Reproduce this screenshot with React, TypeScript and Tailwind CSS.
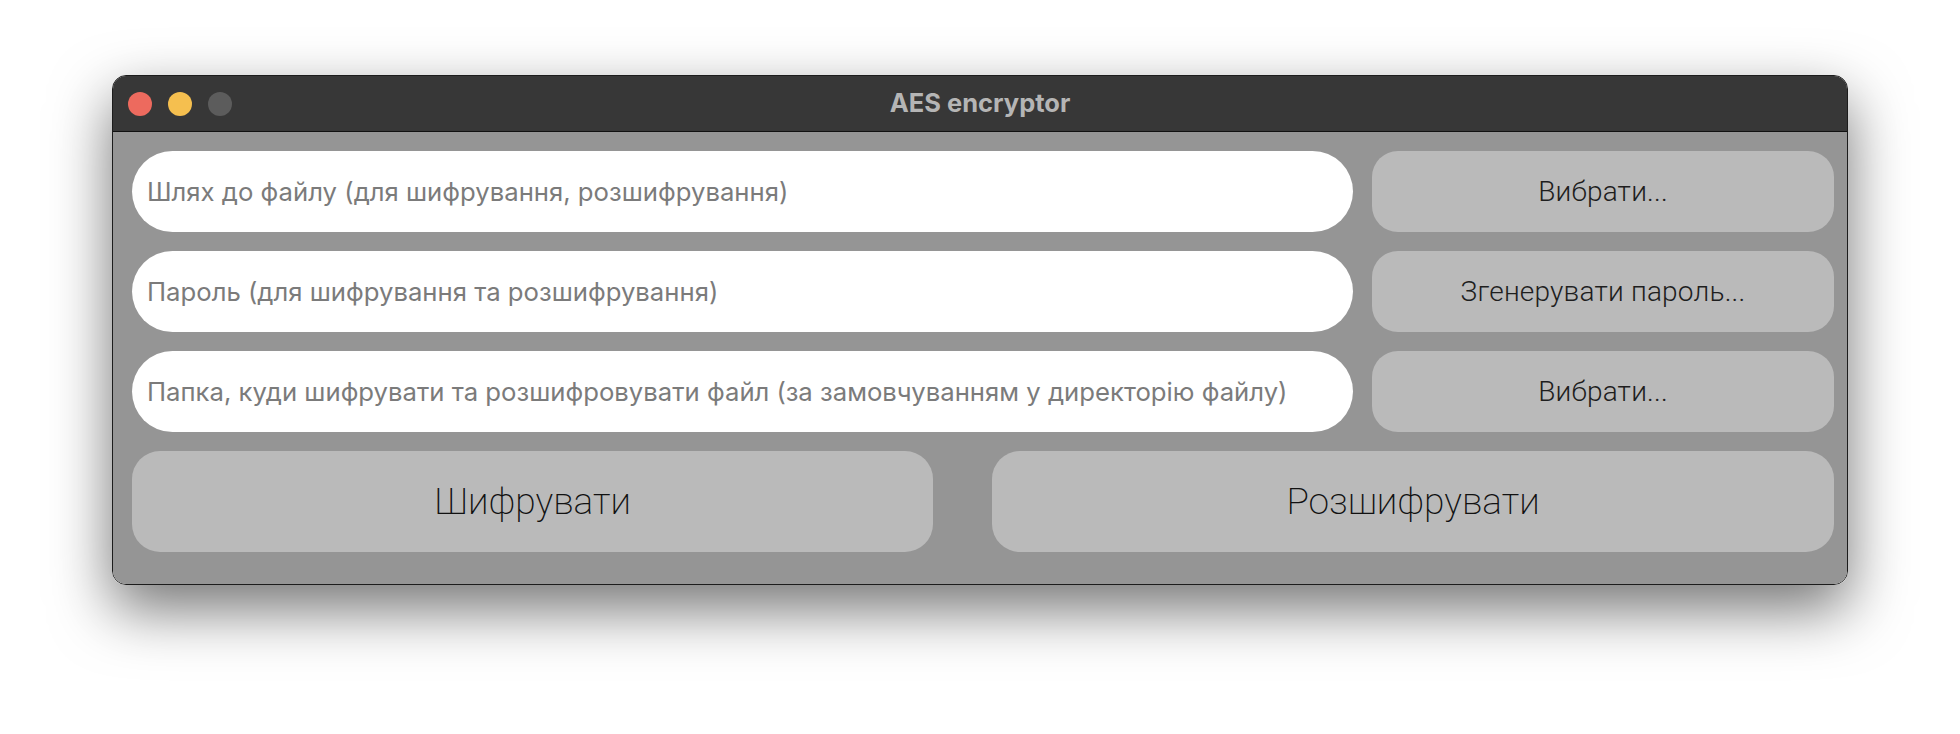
import React from "react";

const rows = [
  { placeholder: "Шлях до файлу (для шифрування, розшифрування)", action: "Вибрати..." },
  { placeholder: "Пароль (для шифрування та розшифрування)", action: "Згенерувати пароль..." },
  {
    placeholder: "Папка, куди шифрувати та розшифровувати файл (за замовчуванням у директорію файлу)",
    action: "Вибрати...",
  },
];

const App = () => {
  return (
    <div className="min-h-[734px] w-[1960px] bg-white pl-[112px] pt-[75px] font-['Roboto',sans-serif]">
      {/* Window */}
      <div className="w-[1736px] overflow-hidden rounded-[14px] border border-[#1c1c1c] shadow-[0_24px_60px_rgba(0,0,0,0.55)]">
        {/* Title bar */}
        <div className="relative flex h-[56px] items-center justify-center border-b border-[#111] bg-[#373737]">
          <div className="absolute left-[15px] top-[16px] flex gap-[16px]">
            <span className="h-[24px] w-[24px] rounded-full bg-[#ed6a5e]" />
            <span className="h-[24px] w-[24px] rounded-full bg-[#f5bf4f]" />
            <span className="h-[24px] w-[24px] rounded-full bg-[#5c5c5c]" />
          </div>
          <h1 className="font-['Inter',sans-serif] text-[25.5px] font-bold text-[#b5b5b5]">AES encryptor</h1>
        </div>

        {/* Content */}
        <div className="flex flex-col gap-[19px] bg-[#959595] pb-[32px] pl-[19px] pr-[13px] pt-[19px]">
          {rows.map((row, i) => (
            <div key={i} className="flex h-[81px] gap-[19px]">
              <input
                className="h-full flex-1 rounded-full bg-white px-[15px] font-['Inter',sans-serif] text-[25.7px] text-[#333] outline-none placeholder:text-[#7b7b7b]"
                placeholder={row.placeholder}
              />
              <button className="h-full w-[462px] rounded-[26px] bg-[#bababa] text-[28px] font-light tracking-[0.2px] text-[#1e1e1e]">
                {row.action}
              </button>
            </div>
          ))}

          <div className="flex h-[101px] gap-[59px]">
            <button className="h-full w-[801px] rounded-[28px] bg-[#bababa] text-[37px] font-extralight text-[#111]">
              Шифрувати
            </button>
            <button className="h-full flex-1 rounded-[28px] bg-[#bababa] text-[37px] font-extralight text-[#111]">
              Розшифрувати
            </button>
          </div>
        </div>
      </div>
    </div>
  );
};

export default App;
